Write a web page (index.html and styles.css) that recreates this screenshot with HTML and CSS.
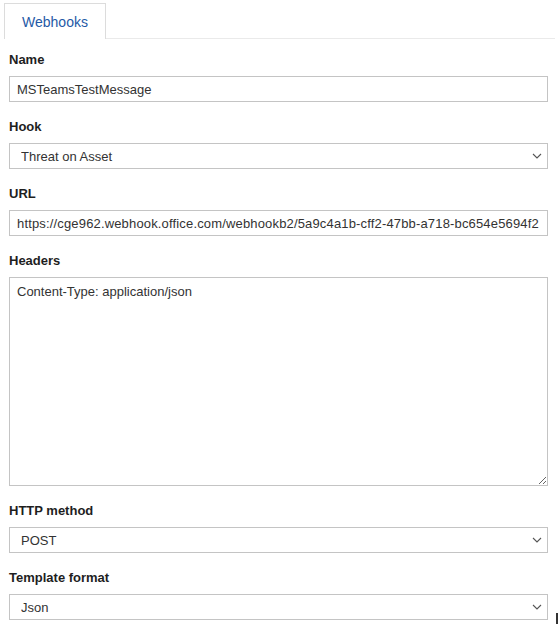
FILE: index.html
```html
<!DOCTYPE html>
<html>
<head>
<meta charset="utf-8">
<link rel="stylesheet" href="styles.css">
</head>
<body>
<div class="page">
  <div class="tabs">
    <div class="tab">Webhooks</div>
  </div>
  <form class="form">
    <div class="field">
      <label class="label">Name</label>
      <input class="control" type="text" value="MSTeamsTestMessage">
    </div>
    <div class="field">
      <label class="label">Hook</label>
      <div class="select-wrap">
        <select class="control select"><option>Threat on Asset</option></select>
        <svg class="chevron" width="10" height="6" viewBox="0 0 10 6"><path d="M1 1 L5 5 L9 1" fill="none" stroke="#555" stroke-width="1.1"/></svg>
      </div>
    </div>
    <div class="field">
      <label class="label">URL</label>
      <input class="control url" type="text" value="https://cge962.webhook.office.com/webhookb2/5a9c4a1b-cff2-47bb-a718-bc654e5694f2">
    </div>
    <div class="field">
      <label class="label">Headers</label>
      <textarea class="control textarea">Content-Type: application/json</textarea>
    </div>
    <div class="field">
      <label class="label">HTTP method</label>
      <div class="select-wrap">
        <select class="control select"><option>POST</option></select>
        <svg class="chevron" width="10" height="6" viewBox="0 0 10 6"><path d="M1 1 L5 5 L9 1" fill="none" stroke="#555" stroke-width="1.1"/></svg>
      </div>
    </div>
    <div class="field">
      <label class="label">Template format</label>
      <div class="select-wrap">
        <select class="control select"><option>Json</option></select>
        <svg class="chevron" width="10" height="6" viewBox="0 0 10 6"><path d="M1 1 L5 5 L9 1" fill="none" stroke="#555" stroke-width="1.1"/></svg>
      </div>
    </div>
  </form>
  <div class="edge-mark"></div>
</div>
</body>
</html>
```

FILE: styles.css
```css
html, body {
  margin: 0;
  padding: 0;
  background: #fff;
}
body {
  font-family: "Liberation Sans", Arial, sans-serif;
  color: #222;
  overflow: hidden;
}
.page {
  position: relative;
  width: 558px;
  height: 624px;
}
.tabs {
  margin: 3px 3px 0 4px;
  border-bottom: 1px solid #eaeaea;
  display: flex;
}
.tab {
  width: 102px;
  height: 36px;
  box-sizing: border-box;
  border: 1px solid #dcdcdc;
  border-bottom: none;
  margin-bottom: -1px;
  background: #fff;
  color: #1f5aa6;
  font-size: 14px;
  display: flex;
  align-items: center;
  justify-content: center;
  padding-top: 1px;
}
.form {
  padding: 13px 10px 0 9px;
  display: flex;
  flex-direction: column;
  gap: 17px;
}
.field {
  display: flex;
  flex-direction: column;
  gap: 8px;
}
.label {
  font-weight: bold;
  font-size: 13px;
  line-height: 16px;
  color: #1e1e1e;
}
.control {
  box-sizing: border-box;
  width: 539px;
  height: 26px;
  margin: 0;
  border: 1px solid #c4c4c4;
  border-radius: 0;
  background: #fff;
  font-family: "Liberation Sans", Arial, sans-serif;
  font-size: 13px;
  color: #333;
  padding: 0 7px;
  outline: none;
}
.url {
  letter-spacing: 0.16px;
}
.select-wrap {
  position: relative;
  width: 539px;
  height: 26px;
}
.select {
  appearance: none;
  -webkit-appearance: none;
  padding: 0 11px;
  display: block;
}
.chevron {
  position: absolute;
  right: 6px;
  top: 10px;
  pointer-events: none;
}
.textarea {
  height: 209px;
  padding: 6px 7px;
  resize: vertical;
  line-height: 15px;
  display: block;
}
.edge-mark {
  position: absolute;
  left: 556px;
  top: 610px;
  width: 2px;
  height: 14px;
  background: #333;
}
```
